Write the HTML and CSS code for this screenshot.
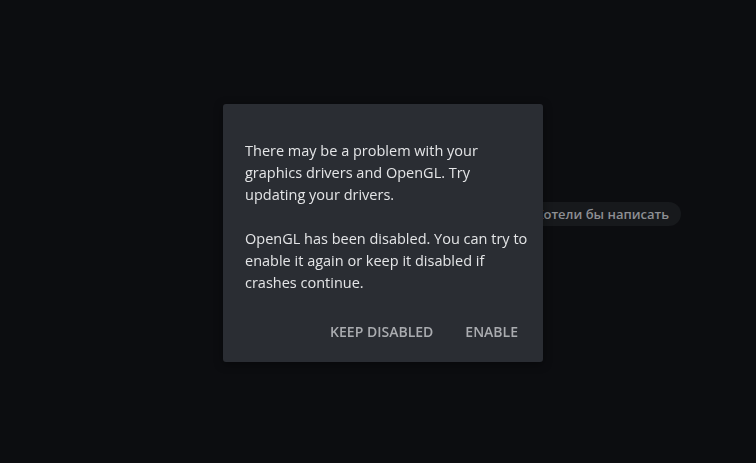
FILE: index.html
```html
<!DOCTYPE html>
<html lang="en">

<head>
    <meta charset="UTF-8">
    <meta name="viewport" content="width=device-width, initial-scale=1.0">
    <title>OpenGL</title>
    <link rel="stylesheet" href="styles.css">
</head>

<body>
    <div class="main">
        <div class="row">
            <div class="pill">Хотели бы написать</div>
        </div>
    </div>

    <div class="overlay">
        <div class="dialog">
            <p>There may be a problem with your graphics drivers and OpenGL. Try updating your drivers.</p>
            <p>OpenGL has been disabled. You can try to enable it again or keep it disabled if crashes continue.</p>
            <div class="actions">
                <button>Keep disabled</button>
                <button>Enable</button>
            </div>
        </div>
    </div>
</body>

</html>
```

FILE: styles.css
```css
* {
    margin: 0;
    padding: 0;
    box-sizing: border-box;
    font-family: "Open Sans", sans-serif;
}

body {
    background-color: #0c0d10;
    width: 100%;
    height: 100vh;
    overflow: hidden;
}

.main {
    width: 100%;
    height: 100vh;
}

.row {
    display: flex;
    justify-content: flex-end;
    padding-top: 202px;
    padding-right: 75px;
}

.pill {
    height: 24px;
    line-height: 24px;
    padding: 0 12px 0 14px;
    border-radius: 12px;
    background-color: #17191c;
    color: #8d8f93;
    font-size: 13px;
    font-weight: 600;
}

.overlay {
    position: fixed;
    inset: 0;
    display: flex;
    justify-content: center;
    align-items: center;
}

.dialog {
    width: 320px;
    margin-left: 10px;
    margin-top: 3px;
    background-color: #2a2d33;
    border-radius: 3px;
    padding: 36px 12px 13px 22px;
    box-shadow: 0 2px 10px rgba(0, 0, 0, 0.4);
}

.dialog p {
    color: #e4e5e7;
    font-size: 14.5px;
    line-height: 22px;
}

.dialog p + p {
    margin-top: 22px;
}

.actions {
    display: flex;
    justify-content: flex-end;
    margin-top: 19px;
    padding-right: 13px;
}

.actions button {
    border: none;
    outline: none;
    background-color: transparent;
    color: #aaacb0;
    font-size: 14px;
    font-weight: 600;
    text-transform: uppercase;
    padding: 0 16px;
    height: 36px;
    cursor: pointer;
}

.actions button:last-child {
    padding-right: 0;
}
```
